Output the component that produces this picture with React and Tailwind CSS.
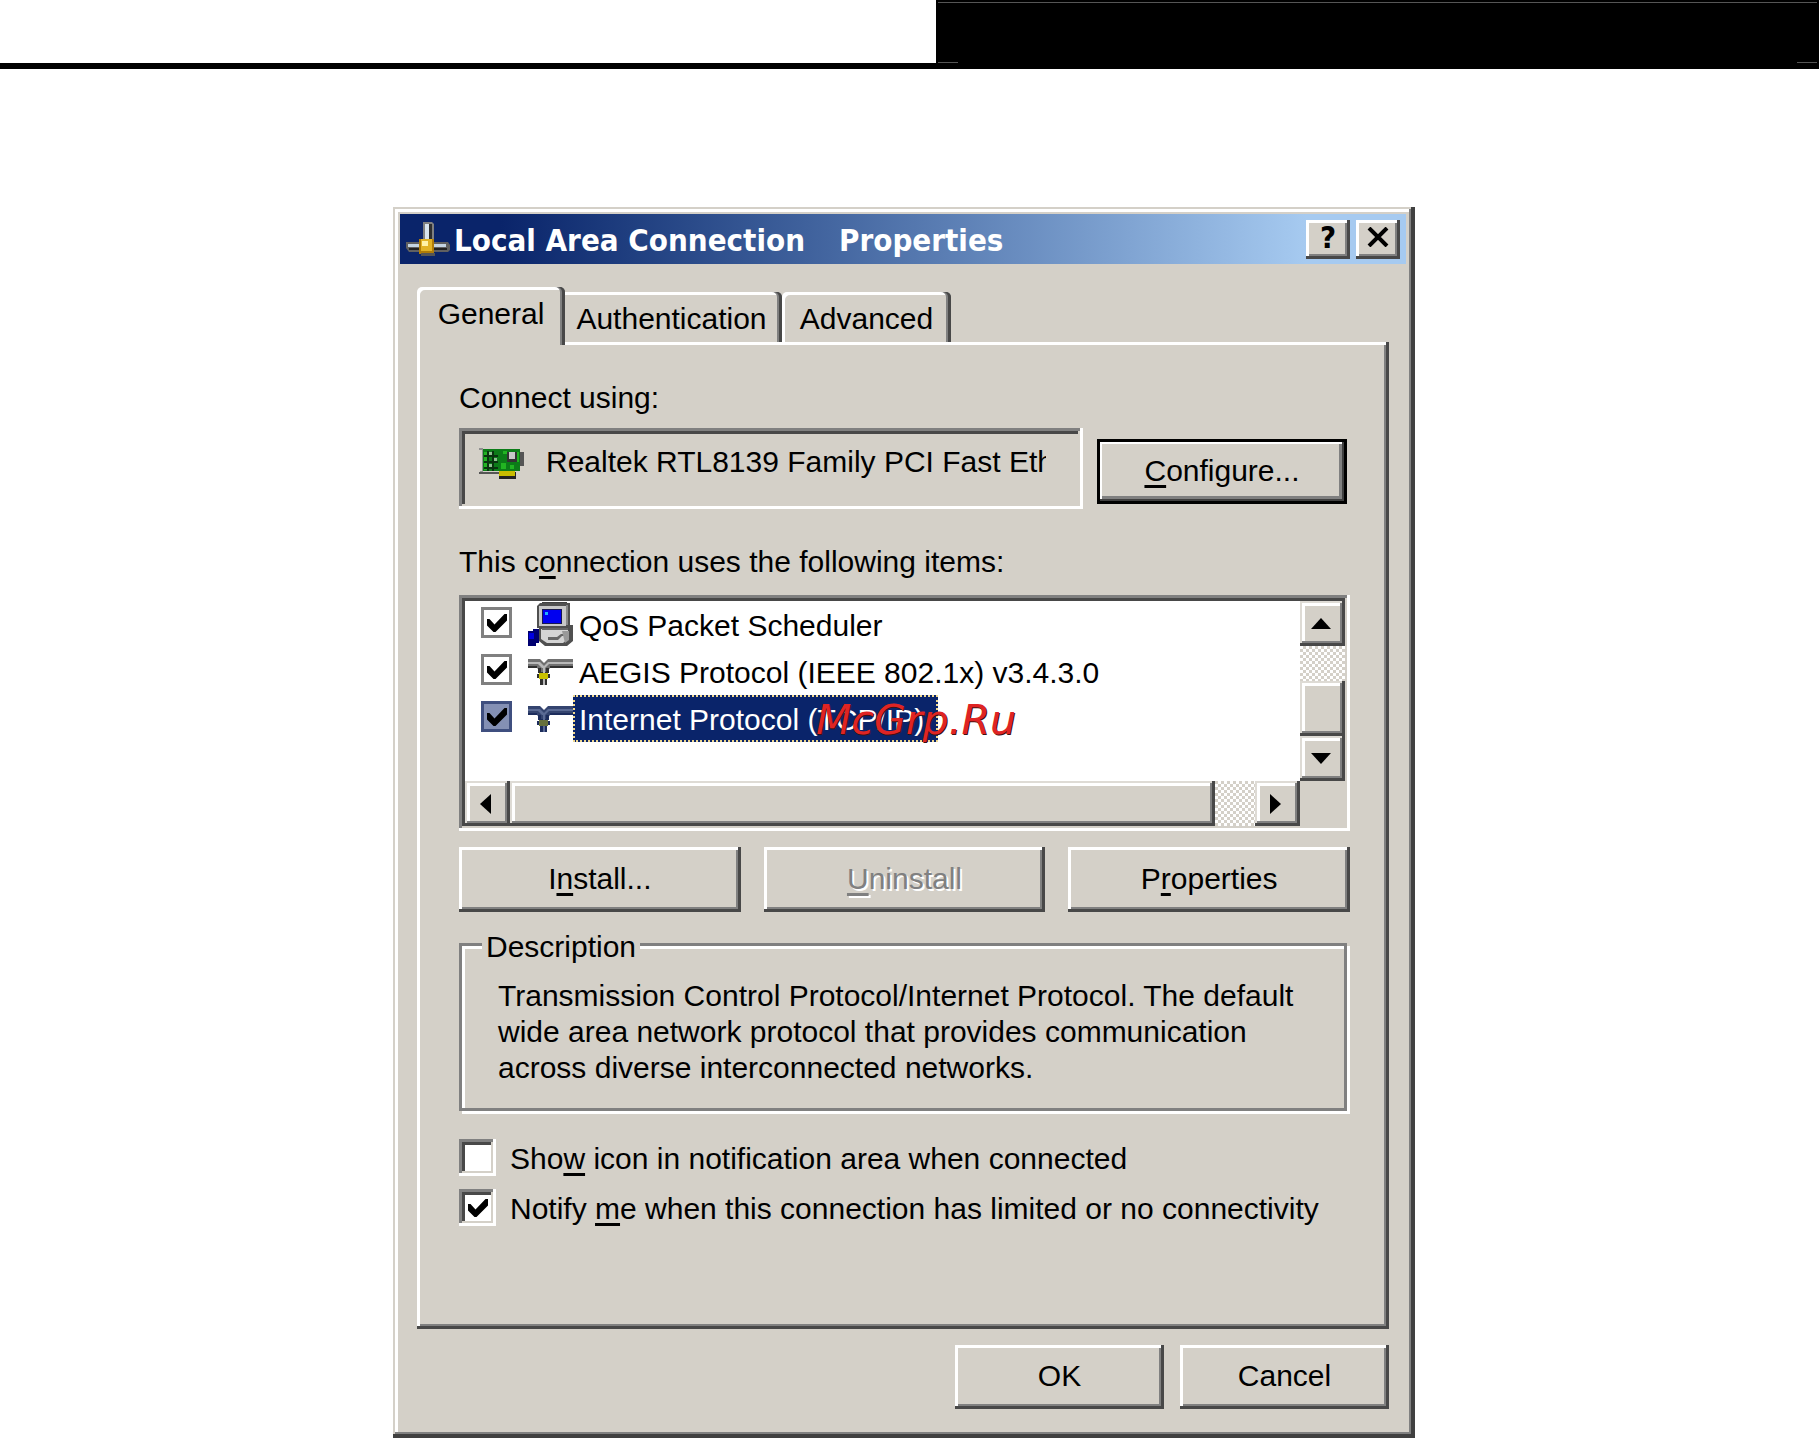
import React from 'react';

const raised = 'bg-[#d4d0c8] shadow-[inset_-3px_-3px_0_#484848,inset_3px_3px_0_#fff,inset_-5px_-5px_0_#808080]';
const raisedThin = 'bg-[#d4d0c8] shadow-[inset_-3px_-3px_0_#484848,inset_2px_2px_0_#dedbd5,inset_-5px_-5px_0_#808080,inset_5px_5px_0_#fff]';
const sunken = 'shadow-[inset_-3px_-3px_0_#fff,inset_3px_3px_0_#808080,inset_-5px_-5px_0_#d4d0c8,inset_6px_6px_0_#484848]';
const track = 'bg-[repeating-conic-gradient(#fff_0_25%,#d4d0c8_0_50%)] bg-[length:6px_6px]';

const Key = ({ children }) => (
    <span className="underline decoration-[3px] underline-offset-[4px] [text-decoration-skip-ink:none]">{children}</span>
);

const PushButton = ({ className = '', children, ...rest }) => (
    <button type="button" className={`${raised} pb-0.5 text-center ${className}`} {...rest}>
        {children}
    </button>
);

const Tick = () => (
    <svg viewBox="0 0 8 8" className="col-start-1 row-start-1 hidden h-5 w-5 place-self-center peer-checked:block pointer-events-none">
        <path d="M0 2.4 L1 2.4 L3 4.6 L7 0.4 L8 0.4 V3 L3.4 7.6 H2.6 L0 5Z" fill="#000" />
    </svg>
);

const ConnectionIcon = () => (
    <svg viewBox="0 0 44 34" className="h-[34px] w-11" aria-hidden="true">
        <path d="M17 0h9l2 2v18H17z" fill="#808080" />
        <path d="M19 2h4v16h-4z" fill="#d8e4ee" />
        <path d="M23 2h3v16h-3z" fill="#303030" />
        <path d="M0 20h42l2 3v5l-2 2H3l-3-4z" fill="#606060" />
        <path d="M2 22h38v3H2z" fill="#c4d4e2" />
        <path d="M3 26h38v2H3z" fill="#222" />
        <path d="M13 17h15v15H13z" fill="#b07c08" />
        <path d="M15 17h11v12H15z" fill="#e2b326" />
        <path d="M16 19h6v5h-6z" fill="#fff2a8" />
        <path d="M15 31h14v3H15z" fill="#555" />
    </svg>
);

const AdapterIcon = () => (
    <svg viewBox="0 0 45 31" className="h-[31px] w-[45px]" aria-hidden="true">
        <path d="M0 0h4v25H1v-2h2V2H0z" fill="#909090" />
        <path d="M4 1h37v3h3v14h-3v5H4z" fill="#0c7c18" />
        <path d="M5 4h3v18H5zM24 3h4v3h-4zM22 15h5v6h-5zM37 4h3v10h-3zM31 17h4v4h-4z" fill="#22b422" />
        <path d="M4 24h16v2H0v-2zM41 4h4v14h-4z" fill="#555" />
        <path d="M5 8h14M5 14h14M5 20h14M9 3v20M14 3v20" stroke="#0a3410" strokeWidth="2" />
        <path d="M10 4h3v3h-3zM15 10h3v3h-3zM10 16h3v3h-3z" fill="#8fbf90" />
        <path d="M28 4h10v10H28z" fill="#333" />
        <path d="M30 4h6v7h-6z" fill="#c8c8c8" />
        <path d="M20 24h17v7H20z" fill="#222" />
        <path d="M20 23h16v5H20z" fill="#c8bc00" />
    </svg>
);

const ComputerIcon = () => (
    <svg viewBox="0 0 45 45" className="h-[45px] w-[45px]" aria-hidden="true">
        <path d="M14 0h25v3H14z" fill="#404040" />
        <path d="M9 4l3-3h30v22h3v16l-6 5H17l-6-5V26H9z" fill="#505050" />
        <path d="M11 4h27v20H11z" fill="#c8c8c8" />
        <path d="M38 3h2v20h-2z" fill="#888" />
        <path d="M14 7h20v15H14z" fill="#181850" />
        <path d="M15 8h18v13H15z" fill="#0000f0" />
        <path d="M17 10h3v3h-3z" fill="#20b0ff" />
        <path d="M13 27h27v10l-5 4H19l-6-4z" fill="#d4d4d4" />
        <path d="M14 26h26v2H14zM20 35h9l4-3h6v2h-5l-4 4H20z" fill="#666" />
        <path d="M34 29h7v9l-4 3z" fill="#999" />
        <path d="M0 29h5v-2h6v14H8v3H0z" fill="#000070" />
        <path d="M1 31h5v6H1z" fill="#0000e0" />
    </svg>
);

const ProtocolIcon = ({ selected }) => {
    const light = selected ? '#5a6a94' : '#b8b8b8';
    const dark = selected ? '#1c2c5c' : '#303030';
    return (
        <svg viewBox="0 0 45 26" className="h-[26px] w-[45px]" aria-hidden="true">
            <path d="M0 0h12l4 4 4-4h25v9H22l-3 4h-6L9 9H0z" fill={selected ? '#34446f' : '#707070'} />
            <path d="M0 3h12l4 4 4-4h25v2H21l-4 4h-3l-4-4H0z" fill={light} />
            <path d="M0 7h9v2H0zM22 7h23v2H22zM10 9h3v5h-3zM18 9h3v5h-3z" fill={dark} />
            <path d="M12 13h7v13h-7z" fill={dark} />
            <path d="M15 8h2v18h-2z" fill={light} />
            <path d="M9 15h13v4H9z" fill={dark} />
            <path d="M11 14h9v6h-9z" fill={selected ? '#66703c' : '#c8c000'} />
        </svg>
    );
};

const arrows = {
    up: 'M0 11 L10 0 L20 11Z',
    down: 'M0 0 H20 L10 11Z',
    left: 'M11 0 V20 L0 10Z',
    right: 'M0 0 L11 10 L0 20Z',
};

const ScrollButton = ({ dir }) => {
    const vertical = dir === 'up' || dir === 'down';
    return (
        <button type="button" aria-label={`Scroll ${dir}`} className={`${raisedThin} grid h-[45px] w-[45px] shrink-0 place-items-center pr-1`}>
            <svg viewBox={vertical ? '0 0 20 11' : '0 0 11 20'} className={vertical ? 'h-[11px] w-5' : 'h-5 w-[11px]'}>
                <path d={arrows[dir]} />
            </svg>
        </button>
    );
};

const items = [
    { name: 'QoS Packet Scheduler', icon: <ComputerIcon /> },
    { name: 'AEGIS Protocol (IEEE 802.1x) v3.4.3.0', icon: <ProtocolIcon /> },
    { name: 'Internet Protocol (TCP/IP)', icon: <ProtocolIcon selected />, selected: true },
];

const ListItem = ({ name, icon, selected }) => (
    <li>
        <label className="flex h-[47px] items-center pl-4">
            <span className="grid pb-1">
                <input
                    type="checkbox"
                    defaultChecked
                    className={`peer col-start-1 row-start-1 h-[31px] w-[31px] appearance-none border-[3px] ${selected ? 'border-[#3f4f7f] bg-[#8490b4]' : 'border-[#808080] bg-white'}`}
                />
                <Tick />
            </span>
            <span className="ml-4 w-[45px]">{icon}</span>
            <span className={`flex h-[47px] items-center border-2 pt-0.5 pl-1 whitespace-nowrap ${selected ? 'border-dotted border-[#f0d890] bg-[#0a246a] pr-3 text-white' : 'border-transparent'}`}>
                {name}
            </span>
        </label>
    </li>
);

const Option = ({ checked, children }) => (
    <label className="flex h-[37px] items-center gap-[14px]">
        <span className="grid">
            <input type="checkbox" defaultChecked={checked} className={`peer col-start-1 row-start-1 h-[37px] w-[37px] appearance-none bg-white ${sunken}`} />
            <Tick />
        </span>
        <span className="pt-0.5 whitespace-nowrap">{children}</span>
    </label>
);

const TitleBar = () => (
    <div className="flex h-[50px] items-center bg-linear-to-r from-[#0a246a] from-10% to-[#a6caf0] to-90% pl-1.5 pr-1.5 font-['DejaVu_Sans_Condensed','DejaVu_Sans',sans-serif] text-[31px] font-bold text-white">
        <ConnectionIcon />
        <h1 className="ml-1 flex grow gap-[34px] pt-0.5 whitespace-nowrap leading-9">
            <span>Local Area Connection</span>
            <span>Properties</span>
        </h1>
        <button type="button" aria-label="Help" className={`${raised} mr-1.5 grid h-[39px] w-11 place-items-center pb-1 leading-8 text-black`}>?</button>
        <button type="button" aria-label="Close" className={`${raised} grid h-[39px] w-11 place-items-center pb-1`}>
            <svg viewBox="0 0 22 20" className="h-5 w-[22px]">
                <path d="M2 1 L20 19 M20 1 L2 19" stroke="#000" strokeWidth="4" />
            </svg>
        </button>
    </div>
);

const Tabs = () => (
    <div role="tablist" className="relative flex items-start">
        <button type="button" role="tab" aria-selected="true" className="h-[58px] w-[148px] rounded-t-[5px] bg-[#d4d0c8] pb-1 shadow-[inset_-3px_0_0_#484848,inset_-5px_0_0_#808080,inset_3px_3px_0_#fff]">
            General
        </button>
        <button type="button" role="tab" aria-selected="false" className="mt-[5px] h-[50px] w-[217px] rounded-tr-[5px] pt-1 pr-1 shadow-[inset_-3px_0_0_#484848,inset_-5px_0_0_#808080,inset_0_3px_0_#fff]">
            Authentication
        </button>
        <button type="button" role="tab" aria-selected="false" className="mt-[5px] h-[50px] w-[169px] rounded-t-[5px] pt-1 shadow-[inset_-3px_0_0_#484848,inset_-5px_0_0_#808080,inset_3px_3px_0_#fff]">
            Advanced
        </button>
    </div>
);

const ItemList = () => (
    <div className={`relative mt-[15px] bg-[#d4d0c8] p-[6px] pr-[5px] pb-[5px] ${sunken}`}>
        <div className="flex h-[180px]">
            <ul className="grow overflow-hidden bg-white">
                {items.map((item) => (
                    <ListItem key={item.name} {...item} />
                ))}
            </ul>
            <div className={`flex w-[45px] flex-col ${track}`}>
                <ScrollButton dir="up" />
                <div className="grow" />
                <div className={`h-[55px] ${raisedThin}`} />
                <ScrollButton dir="down" />
            </div>
        </div>
        <div className="flex pr-[45px]">
            <div className={`flex grow ${track}`}>
                <ScrollButton dir="left" />
                <div className={`mr-10 grow ${raisedThin}`} />
                <ScrollButton dir="right" />
            </div>
        </div>
        <span className="pointer-events-none absolute top-[101px] left-[357px] font-['DejaVu_Sans',sans-serif] text-[41px] leading-[48px] text-[#df2424] italic [text-shadow:1px_1px_0_#401010]">
            McGrp.Ru
        </span>
    </div>
);

const Dialog = () => (
    <section className="w-full max-w-[1022px] bg-[#d4d0c8] pt-[7px] pb-[29px] font-['Liberation_Sans',sans-serif] text-[30px] leading-9 text-black shadow-[inset_-4px_-4px_0_#404040,inset_2px_2px_0_#d4d0c8,inset_-6px_-6px_0_#808080,inset_5px_5px_0_#fff]">
        <div className="pr-[9px] pl-[7px]">
            <TitleBar />
        </div>
        <div className="mt-[23px] pr-[26px] pl-6">
            <Tabs />
            <div role="tabpanel" className="-mt-[3px] pt-[38px] pr-[39px] pb-[103px] pl-[42px] shadow-[inset_-3px_-3px_0_#484848,inset_3px_3px_0_#fff,inset_-5px_-5px_0_#808080]">
                <label htmlFor="adapter" className="block">Connect using:</label>
                <div className="mt-3 flex">
                    <div className={`flex h-[81px] grow items-start pt-4 pl-5 ${sunken}`}>
                        <span className="mt-1 shrink-0"><AdapterIcon /></span>
                        <input id="adapter" readOnly defaultValue="Realtek RTL8139 Family PCI Fast Eth" className="ml-[22px] h-9 w-[500px] bg-transparent outline-none" />
                    </div>
                    <button type="button" className="mt-[11px] mr-[3px] ml-[14px] h-[65px] w-[250px] bg-[#d4d0c8] pb-0.5 shadow-[inset_0_0_0_3px_#000,inset_-5px_-5px_0_#404040,inset_5px_5px_0_#fff,inset_-8px_-8px_0_#808080]">
                        <Key>C</Key>onfigure...
                    </button>
                </div>

                <p className="mt-[35px]">This c<Key>o</Key>nnection uses the following items:</p>
                <ItemList />

                <div className="mt-4 grid grid-cols-3 gap-[23px]">
                    <PushButton className="h-[65px]">I<Key>n</Key>stall...</PushButton>
                    <PushButton className="h-[65px] text-[#808080] [text-shadow:2px_2px_0_#fff]" disabled><Key>U</Key>ninstall</PushButton>
                    <PushButton className="h-[65px]">P<Key>r</Key>operties</PushButton>
                </div>

                <fieldset className="mt-[11px] mr-[3px] border-[3px] border-[#808080] pt-[13px] pb-[22px] pl-9 shadow-[inset_3px_3px_0_#fff,3px_3px_0_#fff]">
                    <legend className="-ml-4 bg-[#d4d0c8] px-1 pt-1.5">Description</legend>
                    <p>
                        Transmission Control Protocol/Internet Protocol. The default<br />
                        wide area network protocol that provides communication<br />
                        across diverse interconnected networks.
                    </p>
                </fieldset>

                <div className="mt-7 flex flex-col gap-[13px]">
                    <Option>Sho<Key>w</Key> icon in notification area when connected</Option>
                    <Option checked>Notify <Key>m</Key>e when this connection has limited or no connectivity</Option>
                </div>
            </div>
            <div className="mt-4 flex justify-end gap-4">
                <PushButton className="h-16 w-[209px]">OK</PushButton>
                <PushButton className="h-16 w-[209px]">Cancel</PushButton>
            </div>
        </div>
    </section>
);

const PageHeader = () => (
    <header className="flex h-[69px] justify-end border-b-[6px] border-black">
        <div className="flex w-[883px] flex-col justify-between bg-black px-0.5 pt-0.5">
            <div className="h-px bg-[#555]" />
            <div className="flex justify-between">
                <div className="h-px w-5 bg-[#555]" />
                <div className="h-px w-5 bg-[#555]" />
            </div>
        </div>
    </header>
);

const App = () => (
    <div className="bg-white">
        <PageHeader />
        <main className="flex justify-center pt-[138px] pr-[11px]">
            <Dialog />
        </main>
    </div>
);

export default App;
